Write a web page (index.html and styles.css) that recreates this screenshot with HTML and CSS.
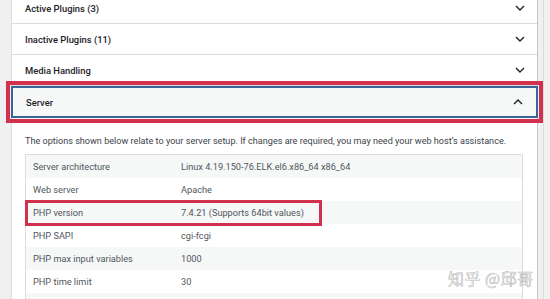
FILE: index.html
```html
<!DOCTYPE html>
<html lang="en">
<head>
<meta charset="utf-8">
<title>Site Health Info</title>
<link rel="stylesheet" href="styles.css">
</head>
<body>
<div class="page">
  <div class="panel">
    <div class="acc-head first">
      <span class="acc-title">Active Plugins (3)</span>
      <svg class="chev" width="10" height="6" viewBox="0 0 10 6"><polyline points="1,1 5,5 9,1" fill="none" stroke="#1d2327" stroke-width="1.4"/></svg>
    </div>
    <div class="acc-head">
      <span class="acc-title">Inactive Plugins (11)</span>
      <svg class="chev" width="10" height="6" viewBox="0 0 10 6"><polyline points="1,1 5,5 9,1" fill="none" stroke="#1d2327" stroke-width="1.4"/></svg>
    </div>
    <div class="acc-head">
      <span class="acc-title">Media Handling</span>
      <svg class="chev" width="10" height="6" viewBox="0 0 10 6"><polyline points="1,1 5,5 9,1" fill="none" stroke="#1d2327" stroke-width="1.4"/></svg>
    </div>
    <div class="acc-head open">
      <span class="acc-title">Server</span>
      <svg class="chev" width="10" height="6" viewBox="0 0 10 6"><polyline points="1,5 5,1 9,5" fill="none" stroke="#1d2327" stroke-width="1.4"/></svg>
    </div>
    <div class="acc-body">
      <p class="desc">The options shown below relate to your server setup. If changes are required, you may need your web host’s assistance.</p>
      <div class="table-wrap">
        <table class="info">
          <tbody>
            <tr><td class="label">Server architecture</td><td>Linux 4.19.150-76.ELK.el6.x86_64 x86_64</td></tr>
            <tr><td class="label">Web server</td><td>Apache</td></tr>
            <tr><td class="label">PHP version</td><td>7.4.21 (Supports 64bit values)</td></tr>
            <tr><td class="label">PHP SAPI</td><td>cgi-fcgi</td></tr>
            <tr><td class="label">PHP max input variables</td><td>1000</td></tr>
            <tr><td class="label">PHP time limit</td><td>30</td></tr>
            <tr><td class="label"></td><td></td></tr>
          </tbody>
        </table>
        <div class="mark"></div>
      </div>
    </div>
  </div>
  <div class="side"></div>
</div>
<div class="watermark">知乎 @邱哥</div>
</body>
</html>
```

FILE: styles.css
```css
html, body {
  margin: 0;
  padding: 0;
}
body {
  width: 550px;
  height: 299px;
  overflow: hidden;
  background: #f0f0f1;
  font-family: Roboto, "Noto Sans", sans-serif;
  color: #1d2327;
  position: relative;
}
.page {
  display: flex;
  padding-left: 11px;
  margin-top: -7px;
}
.panel {
  width: 525px;
  background: #fff;
  border-left: 1px solid #dcdcde;
  border-right: 1px solid #c3c4c7;
}
.side {
  width: 5px;
  border-right: 1px solid #dcdcde;
  height: 330px;
}
.acc-head {
  height: 30px;
  border-bottom: 1px solid #dcdcde;
  display: flex;
  align-items: center;
  justify-content: space-between;
  padding: 0 12px 0 13px;
}
.acc-title {
  font-size: 9.4px;
  font-weight: 500;
  color: #1d2327;
}
.chev {
  display: block;
}
.acc-head.open {
  height: 28px;
  margin-left: -1px;
  margin-right: -1px;
  padding: 0 13px 0 13px;
  background: #f6f7f7;
  border: 2px solid #3b6596;
  outline: 4px solid #d1304f;
  outline-offset: 1px;
}
.acc-body {
  padding: 16px 14px 0 13px;
}
.desc {
  margin: 0 0 6px;
  font-size: 9.1px;
  color: #3c434a;
  line-height: 14px;
  white-space: nowrap;
}
.table-wrap {
  position: relative;
}
.info {
  width: 100%;
  border-collapse: collapse;
  border: 1px solid #dcdcde;
  font-size: 9.2px;
  color: #50575e;
}
.info td {
  height: 23px;
  padding: 0 7px;
  vertical-align: middle;
}
.info td.label {
  width: 134px;
}
.info tr:nth-child(odd) td {
  background: #f6f7f7;
}
.mark {
  position: absolute;
  left: 0;
  top: 46px;
  width: 291px;
  height: 20px;
  border: 3px solid #d1304f;
}
.watermark {
  position: absolute;
  left: 448px;
  top: 266px;
  font-family: "Noto Sans CJK SC", sans-serif;
  font-size: 16px;
  color: rgba(255, 255, 255, 0.6);
  -webkit-text-stroke: 0.6px rgba(120, 120, 120, 0.55);
  letter-spacing: 0.5px;
}
```
